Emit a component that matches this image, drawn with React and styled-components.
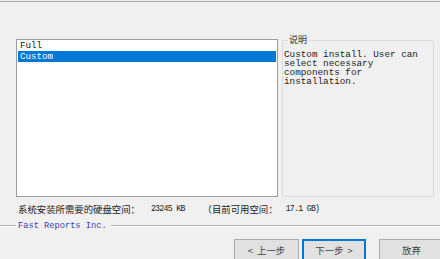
import React from 'react';
import styled, { createGlobalStyle } from 'styled-components';

const GlobalStyle = createGlobalStyle`
  html, body {
    margin: 0;
    padding: 0;
    background: #f0f0f0;
  }
`;

const Page = styled.div`
  width: 440px;
  height: 259px;
  overflow: hidden;
  background: #f0f0f0;
  padding-top: 1px;
  box-sizing: border-box;
  font-family: "Liberation Mono", "Noto Sans CJK SC", monospace;
  color: #1a1a1a;
`;

const TopRule = styled.div`
  height: 1px;
  background: #a9a9a9;
`;

const Main = styled.div`
  display: flex;
  align-items: flex-start;
  gap: 4px;
  margin: 37px 0 0 16px;
`;

const ListBox = styled.div`
  width: 262px;
  height: 158px;
  box-sizing: border-box;
  border: 1px solid #9c9c9c;
  background: #fff;
  padding: 0 1px;
`;

const ListItem = styled.div`
  height: 11px;
  line-height: 11px;
  padding-left: 2px;
  font-size: 9.2px;
  background: ${({ selected }) => (selected ? '#0078d7' : 'transparent')};
  color: ${({ selected }) => (selected ? '#fff' : '#111')};
`;

const GroupBox = styled.div`
  position: relative;
  margin-top: 1px;
  width: 152px;
  height: 157px;
  box-sizing: border-box;
  border: 1px solid #dcdcdc;
  padding: 9px 1px 0 1px;
`;

const GroupTitle = styled.span`
  position: absolute;
  top: -7px;
  left: 5px;
  padding: 0 1px;
  background: #f0f0f0;
  font-family: "Noto Sans CJK SC", sans-serif;
  font-size: 9px;
  line-height: 12px;
  color: #333;
`;

const Description = styled.div`
  font-size: 9.3px;
  line-height: 9px;
  color: #222;
  white-space: pre-line;
`;

const DiskLine = styled.div`
  display: flex;
  align-items: center;
  margin-top: 6px;
  padding-left: 18px;
  height: 12px;
  color: #222;
`;

const Cn = styled.span`
  font-family: "Noto Sans CJK SC", sans-serif;
  font-size: 9.4px;
  line-height: 12px;
  margin-left: ${({ gap }) => gap || 0}px;
`;

const Num = styled.span`
  font-family: "Liberation Mono", monospace;
  font-size: 8.2px;
  letter-spacing: -0.7px;
  line-height: 12px;
  margin-left: ${({ gap }) => gap || 0}px;
`;

const Brand = styled.div`
  display: flex;
  align-items: center;
  margin-top: 6px;
  height: 10px;
`;

const Rule = styled.div`
  height: 0;
  border-top: 1px solid #b4b4b4;
  border-bottom: 1px solid #fdfdfd;
  width: ${({ w }) => (w ? `${w}px` : 'auto')};
  flex: ${({ w }) => (w ? 'none' : 1)};
`;

const BrandName = styled.span`
  margin: 0 4px 0 2px;
  font-size: 8.7px;
  line-height: 10px;
  color: #3c3cae;
`;

const Buttons = styled.div`
  display: flex;
  margin-top: 8px;
  padding-left: 234px;
`;

const Button = styled.div`
  flex: none;
  width: ${({ w }) => w}px;
  height: 22px;
  box-sizing: border-box;
  margin-left: ${({ gap }) => gap || 0}px;
  display: flex;
  align-items: center;
  justify-content: center;
  background: #e1e1e1;
  border: 1px solid ${({ primary }) => (primary ? '#0078d7' : '#adadad')};
  box-shadow: ${({ primary }) => (primary ? 'inset 0 0 0 1px #0078d7' : 'none')};
  font-family: "Noto Sans CJK SC", sans-serif;
  font-size: 9.4px;
  color: #444;
  gap: 4px;
`;

const App = () => (
  <Page>
    <GlobalStyle />
    <TopRule />
    <Main>
      <ListBox>
        <ListItem>Full</ListItem>
        <ListItem selected>Custom</ListItem>
      </ListBox>
      <GroupBox>
        <GroupTitle>说明</GroupTitle>
        <Description>
          {'Custom install. User can\nselect necessary\ncomponents for\ninstallation.'}
        </Description>
      </GroupBox>
    </Main>
    <DiskLine>
      <Cn>系统安装所需要的硬盘空间：</Cn>
      <Num gap={11}>23245 KB</Num>
      <Cn gap={18}>（目前可用空间：</Cn>
      <Num gap={8}>17.1 GB)</Num>
    </DiskLine>
    <Brand>
      <Rule w={16} />
      <BrandName>Fast Reports Inc.</BrandName>
      <Rule />
    </Brand>
    <Buttons>
      <Button w={65}>
        <span>&lt;</span>
        <span>上一步</span>
      </Button>
      <Button w={64} gap={3} primary>
        <span>下一步</span>
        <span>&gt;</span>
      </Button>
      <Button w={65} gap={13}>放弃</Button>
    </Buttons>
  </Page>
);

export default App;
